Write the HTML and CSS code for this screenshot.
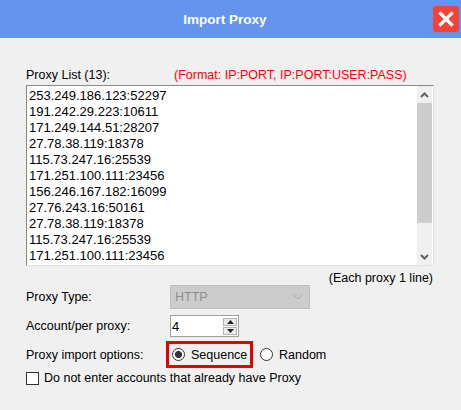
FILE: index.html
```html
<!DOCTYPE html>
<html lang="en">
<head>
  <meta charset="UTF-8" />
  <title>Import Proxy</title>
  <link rel="stylesheet" href="styles.css">
</head>
<body>
  <header class="titlebar">
    <span></span>
    <h1 class="title">Import Proxy</h1>
    <button class="close" type="button" aria-label="Close">
      <svg width="26" height="26" viewBox="0 0 26 26">
        <path d="M7.5 7.5 L18.5 18.5 M18.5 7.5 L7.5 18.5" stroke="#fff" stroke-width="3.2" stroke-linecap="square" fill="none"/>
      </svg>
    </button>
  </header>

  <main class="content">
    <div class="list-head">
      <span class="list-title">Proxy List (13):</span>
      <span class="format">(Format: IP:PORT, IP:PORT:USER:PASS)</span>
    </div>

    <div class="proxy-list">
      <div class="lines">
        <div>253.249.186.123:52297</div>
        <div>191.242.29.223:10611</div>
        <div>171.249.144.51:28207</div>
        <div>27.78.38.119:18378</div>
        <div>115.73.247.16:25539</div>
        <div>171.251.100.111:23456</div>
        <div>156.246.167.182:16099</div>
        <div>27.76.243.16:50161</div>
        <div>27.78.38.119:18378</div>
        <div>115.73.247.16:25539</div>
        <div>171.251.100.111:23456</div>
      </div>
      <div class="scrollbar">
        <div class="sb-btn">
          <svg width="9" height="6" viewBox="0 0 9 6"><path d="M1 5 L4.5 1.5 L8 5" stroke="#606060" stroke-width="2" fill="none"/></svg>
        </div>
        <div class="sb-thumb"></div>
        <div class="sb-track"></div>
        <div class="sb-btn down">
          <svg width="9" height="6" viewBox="0 0 9 6"><path d="M1 1 L4.5 4.5 L8 1" stroke="#606060" stroke-width="2" fill="none"/></svg>
        </div>
      </div>
    </div>

    <p class="hint">(Each proxy 1 line)</p>

    <div class="row row-type">
      <label class="field-label">Proxy Type:</label>
      <div class="select">
        <span>HTTP</span>
        <svg width="10" height="6" viewBox="0 0 10 6"><path d="M1 1 L5 5 L9 1" stroke="#a8a8a8" stroke-width="1" fill="none"/></svg>
      </div>
    </div>

    <div class="row row-account">
      <label class="field-label" for="perProxy">Account/per proxy:</label>
      <div class="spin">
        <input type="text" id="perProxy" value="4" />
        <div class="spin-btns">
          <span class="spin-btn"><svg width="7" height="4" viewBox="0 0 7 4"><path d="M0 4 L3.5 0 L7 4 Z" fill="#222"/></svg></span>
          <span class="spin-btn"><svg width="7" height="4" viewBox="0 0 7 4"><path d="M0 0 L3.5 4 L7 0 Z" fill="#222"/></svg></span>
        </div>
      </div>
    </div>

    <div class="row row-options">
      <label class="field-label options-label">Proxy import options:</label>
      <label class="radio highlight"><input type="radio" name="order" checked /> Sequence</label>
      <label class="radio random"><input type="radio" name="order" /> Random</label>
    </div>

    <label class="check-row"><input type="checkbox" /> Do not enter accounts that already have Proxy</label>
  </main>
</body>
</html>
```

FILE: styles.css
```css
body {
  margin: 0;
  width: 461px;
  height: 410px;
  overflow: hidden;
  background: #f0f0f0;
  font-family: "Liberation Sans", Arial, sans-serif;
  font-size: 12.5px;
  color: #000;
}
.titlebar {
  height: 38px;
  background: #6495ed;
  display: grid;
  grid-template-columns: 1fr auto 1fr;
  align-items: center;
  padding-right: 2px;
}
.title {
  margin: 0 9px 0 0;
  font-size: 13.5px;
  font-weight: bold;
  color: #fff;
}
.close {
  justify-self: end;
  width: 26px;
  height: 26px;
  padding: 0;
  border: none;
  border-radius: 3px;
  background: #f44336;
  display: flex;
}
.content {
  padding: 29px 27px 0 26px;
}
.list-head {
  display: flex;
  line-height: 16px;
}
.list-title {
  width: 148px;
}
.format {
  color: #ff0000;
}
.proxy-list {
  margin-top: 2px;
  height: 181px;
  box-sizing: border-box;
  display: flex;
  background: #fff;
  border: 1px solid;
  border-color: #8a8a8a #e2e2e2 #e2e2e2 #8a8a8a;
  padding-right: 1px;
}
.lines {
  flex: 1;
  padding: 2px 0 0 2px;
  font-size: 13px;
  line-height: 16px;
}
.scrollbar {
  width: 15px;
  display: flex;
  flex-direction: column;
  background: #f0f0f0;
}
.sb-btn {
  height: 17px;
  display: flex;
  align-items: center;
  justify-content: center;
}
.sb-btn.down {
  height: 16px;
}
.sb-thumb {
  height: 120px;
  background: #cdcdcd;
}
.sb-track {
  flex: 1;
}
.hint {
  margin: 5px 0 0;
  line-height: 14px;
  text-align: right;
  padding-right: 1px;
}
.row {
  display: flex;
  align-items: center;
}
.field-label {
  width: 144px;
  flex-shrink: 0;
}
.row-type {
  height: 24px;
}
.select {
  width: 140px;
  height: 24px;
  box-sizing: border-box;
  background: #cccccc;
  border: 1px solid #bdbdbd;
  display: flex;
  align-items: center;
  justify-content: space-between;
  padding: 0 6px 0 4px;
  color: #8c8c8c;
}
.row-account {
  margin-top: 6px;
  height: 22px;
}
.spin {
  width: 69px;
  height: 22px;
  box-sizing: border-box;
  border: 1px solid #a0a0a0;
  background: #fff;
  display: flex;
  align-items: center;
}
.spin input {
  width: 48px;
  border: none;
  padding: 0 0 0 1px;
  font: inherit;
  font-size: 13px;
  outline: none;
  background: transparent;
}
.spin-btns {
  margin-left: auto;
  margin-right: 1px;
  display: flex;
  flex-direction: column;
  gap: 1px;
}
.spin-btn {
  width: 14px;
  height: 8px;
  box-sizing: border-box;
  border: 1px solid #b4b4b4;
  background: #ececec;
  display: flex;
  align-items: center;
  justify-content: center;
}
.row-options {
  margin-top: 4px;
  height: 27px;
}
.field-label.options-label {
  width: 140px;
}
.radio {
  display: flex;
  align-items: center;
  gap: 6px;
}
.highlight {
  width: 87px;
  height: 27px;
  box-sizing: border-box;
  border: 3px solid #e60000;
  padding-left: 3px;
}
.random {
  margin-left: 7px;
}
input[type="radio"] {
  appearance: none;
  width: 13px;
  height: 13px;
  margin: 0;
  border: 1px solid #333;
  border-radius: 50%;
  background: #fff;
}
input[type="radio"]:checked {
  background: radial-gradient(circle, #333 0 3.3px, #fff 3.8px);
}
.check-row {
  margin-top: 2px;
  display: flex;
  align-items: center;
  gap: 5px;
  line-height: 16px;
}
input[type="checkbox"] {
  appearance: none;
  width: 13px;
  height: 13px;
  margin: 0;
  border: 1px solid #333;
  background: #fff;
}
```
